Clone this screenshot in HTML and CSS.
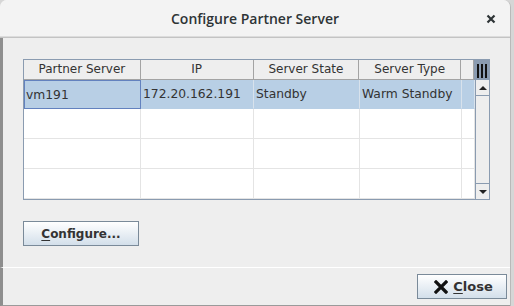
FILE: index.html
```html
<!DOCTYPE HTML>
<html>
	<head>
		<meta charset="utf-8">
		<title>Configure Partner Server</title>
		<link rel="stylesheet" href="styles.css">
	</head>
	<body>
		<div class="window">
			<div class="titlebar">
				<span class="title">Configure Partner Server</span>
				<svg class="x" width="10" height="10" viewBox="0 0 10 10"><path d="M1.5 1.5 L8.5 8.5 M8.5 1.5 L1.5 8.5" stroke="#2e3436" stroke-width="2.2"/></svg>
			</div>

			<div class="content">
				<div class="table">
					<div class="thead">
						<div class="th c1">Partner Server</div>
						<div class="th c2">IP</div>
						<div class="th c3">Server State</div>
						<div class="th c4">Server Type</div>
						<div class="th c5"></div>
						<div class="corner"><i></i><i></i><i></i></div>
					</div>
					<div class="tbody">
						<div class="rows">
							<div class="row selected">
								<div class="td c1 focus">vm191</div>
								<div class="td c2">172.20.162.191</div>
								<div class="td c3">Standby</div>
								<div class="td c4">Warm Standby</div>
								<div class="td c5"></div>
							</div>
							<div class="row">
								<div class="td c1"></div><div class="td c2"></div><div class="td c3"></div><div class="td c4"></div><div class="td c5"></div>
							</div>
							<div class="row">
								<div class="td c1"></div><div class="td c2"></div><div class="td c3"></div><div class="td c4"></div><div class="td c5"></div>
							</div>
							<div class="row">
								<div class="td c1"></div><div class="td c2"></div><div class="td c3"></div><div class="td c4"></div><div class="td c5"></div>
							</div>
						</div>
						<div class="scrollbar">
							<div class="arrow up"><span></span></div>
							<div class="track"></div>
							<div class="arrow down"><span></span></div>
						</div>
					</div>
				</div>

				<button class="btn configure"><u>C</u>onfigure...</button>
			</div>

			<div class="footer">
				<button class="btn close">
					<svg width="14" height="14" viewBox="0 0 14 14"><path d="M2 2 L12 12 M12 2 L2 12" stroke="#111" stroke-width="3.2" stroke-linecap="square"/></svg>
					<span><u>C</u>lose</span>
				</button>
			</div>
		</div>
	</body>
</html>
```

FILE: styles.css
```css
*{
	box-sizing: border-box;
}
html, body{
	margin:0;
	padding:0;
	height:100%;
}
body{
	background-color: #d6d6d6;
	font-family: "DejaVu Sans", sans-serif;
	font-size: 12px;
	color: #333;
	overflow: hidden;
}

.window{
	width: 511px;
	height: 306px;
	background-color: #eeeeee;
	border-radius: 7px 7px 0 0;
	border-right: 1px solid #b9b9b9;
	display: flex;
	flex-direction: column;
}

.titlebar{
	height: 38px;
	flex: none;
	background-color: #f3f3f3;
	border-radius: 7px 7px 0 0;
	border-bottom: 1px solid #c3c3c3;
	box-shadow: inset 0 -1px 0 #dcdcdc;
	display: flex;
	align-items: center;
	justify-content: center;
	position: relative;
}
.title{
	font-family: "Open Sans", sans-serif;
	font-weight: 600;
	font-size: 14px;
	color: #2e3436;
}
.x{
	position: absolute;
	right: 14px;
	top: 14px;
}

.content{
	flex: none;
	height: 230px;
	border-left: 3px solid #8e8e8e;
	border-bottom: 1px solid #ffffff;
	padding: 21px 0 0 20px;
	background-color: #eeeeee;
}

.table{
	width: 467px;
	border: 1px solid #8a9bb0;
	background-color: #ffffff;
}
.thead{
	display: flex;
	height: 20px;
	background-color: #eeeeee;
}
.th{
	border-right: 1px solid #a3a3a3;
	border-bottom: 1px solid #a3a3a3;
	text-align: center;
	line-height: 19px;
	color: #333;
}
.c1{ width: 117px; }
.c2{ width: 113px; }
.c3{ width: 106px; }
.c4{ width: 102px; }
.c5{ width: 13px; }
.corner{
	width: 15px;
	background-color: #8a9bb0;
	display: flex;
	justify-content: center;
	align-items: center;
	gap: 2px;
	padding-top: 1px;
}
.corner i{
	display: block;
	width: 2px;
	height: 14px;
	background-color: #111;
}

.tbody{
	display: flex;
}
.rows{
	width: 451px;
}
.row{
	display: flex;
	height: 30px;
}
.row:first-child{
	height: 29px;
}
.td{
	border-right: 1px solid #e4e4e4;
	border-bottom: 1px solid #e4e4e4;
	line-height: 29px;
	padding-left: 2px;
	white-space: nowrap;
	font-size: 12.3px;
}
.selected .td{
	background-color: #b8cfe5;
	border-color: #b8cfe5;
	border-right-color: #d8e2ec;
}
.selected .focus{
	border: 1px solid #6382bf;
	line-height: 28px;
	padding-left: 1px;
}

.scrollbar{
	width: 15px;
	display: flex;
	flex-direction: column;
	background-color: #eeeeee;
	border-left: 1px solid #8a9bb0;
}
.arrow{
	height: 16px;
	display: flex;
	align-items: center;
	justify-content: center;
	background-color: #eeeeee;
}
.arrow.up{
	border-bottom: 1px solid #8a9bb0;
}
.arrow.down{
	border-top: 1px solid #8a9bb0;
}
.arrow span{
	width: 0;
	height: 0;
	border-left: 4px solid transparent;
	border-right: 4px solid transparent;
}
.up span{
	border-bottom: 4px solid #222;
}
.down span{
	border-top: 4px solid #222;
}
.track{
	flex: 1;
	background-color: #eeeeee;
}

.btn{
	font-family: "DejaVu Sans", sans-serif;
	font-size: 12px;
	font-weight: bold;
	color: #333;
	border: 1px solid #7a8a99;
	background: linear-gradient(#ffffff, #d3dfea);
	padding: 0;
	margin: 0;
}
.btn u{
	text-decoration-thickness: 1px;
	text-underline-offset: 2px;
}
.configure{
	display: block;
	margin-top: 21px;
	width: 116px;
	height: 25px;
}

.footer{
	flex: 1;
	border-left: 3px solid #8e8e8e;
	border-bottom: 1px solid #9a9a9a;
	background-color: #eeeeee;
	display: flex;
	justify-content: flex-end;
	padding: 6px 3px 0 0;
}
.close{
	width: 90px;
	height: 25px;
	display: flex;
	align-items: center;
	justify-content: center;
	gap: 5px;
	padding-left: 3px;
	font-size: 13px;
}
```
